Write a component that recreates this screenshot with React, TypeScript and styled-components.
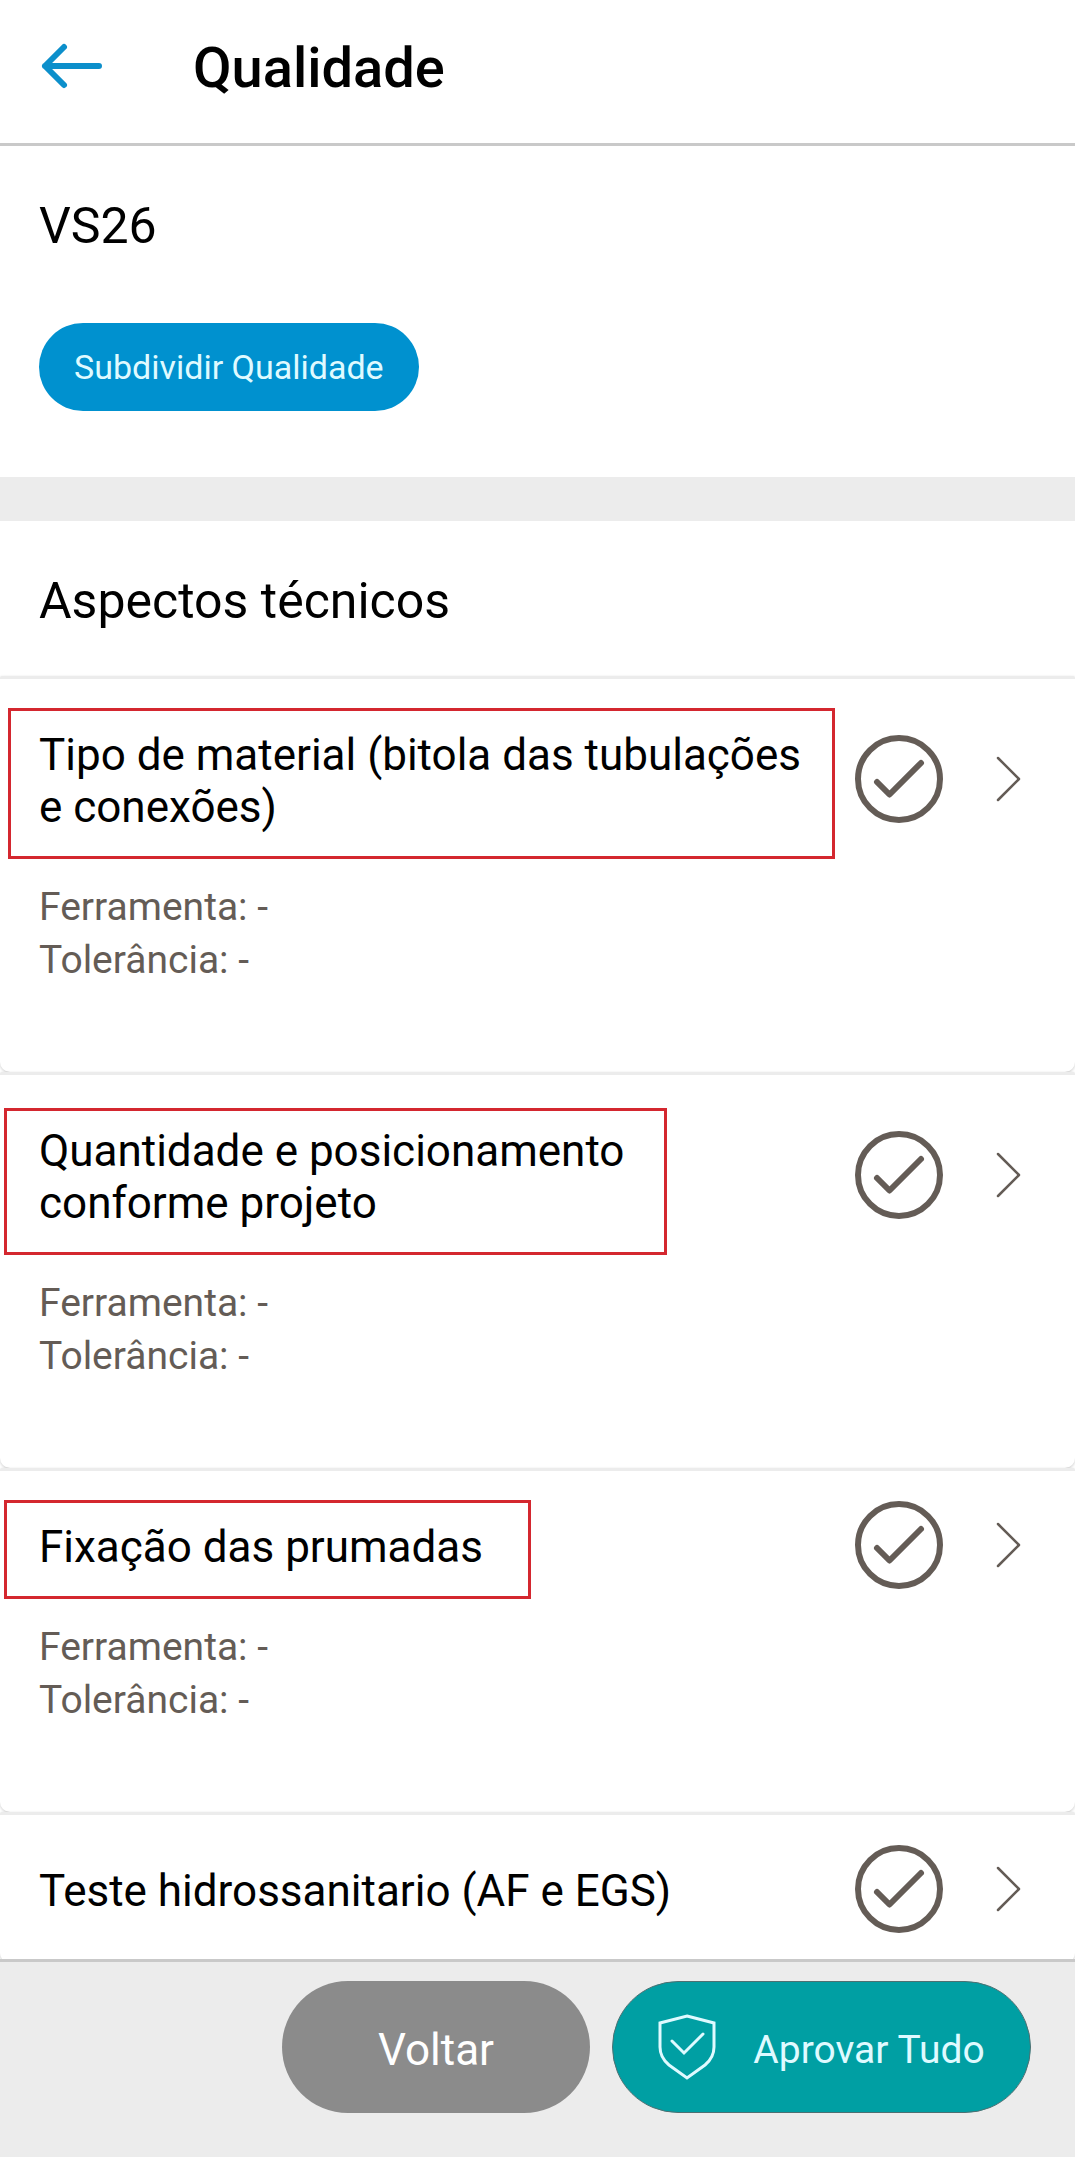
import React from "react";
import styled, { createGlobalStyle } from "styled-components";

const GlobalStyle = createGlobalStyle`
  * { box-sizing: border-box; }
  body {
    margin: 0;
    background: #ffffff;
    color: #000000;
    font-family: Roboto, "Liberation Sans", sans-serif;
  }
  h1, h2, h3, p, ul { margin: 0; padding: 0; font-weight: 400; }
  button { font: inherit; padding: 0; border: 0; background: none; cursor: pointer; }
  svg { display: block; }
`;

const Page = styled.div`
  height: 100vh;
  display: flex;
  flex-direction: column;
`;

const Header = styled.header`
  flex: none;
  display: flex;
  align-items: center;
  gap: 89px;
  padding: 36px 40px 43px;
  border-bottom: 3px solid #c9c9c9;
`;

const BackButton = styled.button`
  display: flex;
  padding-bottom: 4px;
  color: #0c8fcb;
`;

const PageTitle = styled.h1`
  font-size: 56px;
  line-height: 64px;
  font-weight: 500;
`;

const Content = styled.main`
  flex: 1;
  min-height: 0;
  overflow-y: auto;
  scrollbar-width: none;
`;

const Summary = styled.section`
  display: flex;
  flex-direction: column;
  align-items: flex-start;
  gap: 67px;
  padding: 50px 39px 66px;
`;

const SectionTitle = styled.h2`
  font-size: 50px;
  line-height: 60px;
`;

const SplitButton = styled.button`
  height: 88px;
  padding: 0 35px;
  border-radius: 44px;
  background: #0091cf;
  color: #dffaff;
  font-size: 34px;
`;

const Band = styled.div`
  height: 44px;
  background: #ececec;
`;

const AspectsHeader = styled.div`
  padding: 50px 39px 45px;
`;

const CardList = styled.ul`
  list-style: none;
`;

const Card = styled.li`
  border-top: 3px solid #ececec;
  border-radius: 2px 2px 10px 10px;
  background: #ffffff;
  box-shadow: 0 1px 3px rgba(0, 0, 0, 0.2);
`;

const CardHead = styled.div`
  position: relative;
  display: flex;
  align-items: center;
  padding-right: 54px;
`;

const CardTitle = styled.h3`
  flex: 1;
  padding: 50px 20px 46px 39px;
  font-size: 44px;
  line-height: 52px;
`;

const IconButton = styled.button`
  display: flex;
  margin-left: 12px;
  color: #645c56;

  & + & {
    margin-left: 53px;
  }
`;

const Highlight = styled.span<{ $top: number; $left: number; $width: number; $bottom: number }>`
  position: absolute;
  top: ${(p) => p.$top}px;
  left: ${(p) => p.$left}px;
  width: ${(p) => p.$width}px;
  bottom: ${(p) => p.$bottom}px;
  border: 3px solid #d4272f;
  pointer-events: none;
`;

const Details = styled.div`
  padding: 2px 39px 85px;
  color: #645c56;
  font-size: 39px;
  line-height: 53px;
`;

const Footer = styled.footer`
  flex: none;
  position: relative;
  display: flex;
  justify-content: flex-end;
  gap: 22px;
  padding: 19px 44px 44px;
  border-top: 3px solid #c9c9c9;
  background: #ececec;
`;

const FooterButton = styled.button`
  display: flex;
  align-items: center;
  justify-content: center;
  height: 132px;
  border-radius: 66px;
`;

const FooterLabel = styled.span`
  padding-top: 5px;
`;

const GoBack = styled(FooterButton)`
  width: 308px;
  background: #8b8b8b;
  color: #ffffff;
  font-size: 44px;
`;

const ApproveAll = styled(FooterButton)`
  width: 419px;
  gap: 37px;
  border: 1px solid #4d7072;
  background: #009fa3;
  color: #dffaff;
  font-size: 39px;
`;

const BackArrow = () => (
  <svg width="64" height="48" viewBox="0 0 64 48" fill="none" stroke="currentColor" strokeWidth="6" strokeLinecap="round" strokeLinejoin="round">
    <path d="M59 24H5M24 5L5 24L24 43" />
  </svg>
);

const CheckCircle = () => (
  <svg width="88" height="88" viewBox="0 0 88 88" fill="none" stroke="currentColor" strokeWidth="6" strokeLinecap="round" strokeLinejoin="round">
    <circle cx="44" cy="44" r="41" />
    <path d="M22 47L34.500 59.500L66 28" />
  </svg>
);

const Chevron = () => (
  <svg width="25" height="46" viewBox="0 0 25 46" fill="none" stroke="currentColor" strokeWidth="2.500" strokeLinecap="round" strokeLinejoin="round">
    <path d="M2 2L23 23L2 44" />
  </svg>
);

const Shield = () => (
  <svg width="58" height="66" viewBox="0 0 58 66" fill="none" stroke="currentColor" strokeWidth="3">
    <path d="M29 2L56 9V33C56 40 53 46 47 51L29 64L11 51C5 46 2 40 2 33V9Z" />
    <path d="M14 27L26 39L45 20" strokeLinecap="round" />
  </svg>
);

type Mark = { top: number; left: number; width: number; bottom: number };
type Aspect = { title: string; mark?: Mark };

const aspects: Aspect[] = [
  { title: "Tipo de material (bitola das tubulações e conexões)", mark: { top: 29, left: 8, width: 827, bottom: 20 } },
  { title: "Quantidade e posicionamento conforme projeto", mark: { top: 33, left: 4, width: 663, bottom: 20 } },
  { title: "Fixação das prumadas", mark: { top: 29, left: 4, width: 527, bottom: 20 } },
];

const AspectHead = ({ title, mark }: Aspect) => (
  <CardHead>
    <CardTitle>{title}</CardTitle>
    <IconButton aria-label="Aprovar"><CheckCircle /></IconButton>
    <IconButton aria-label="Abrir"><Chevron /></IconButton>
    {mark && <Highlight $top={mark.top} $left={mark.left} $width={mark.width} $bottom={mark.bottom} />}
  </CardHead>
);

export default function App() {
  return (
    <Page>
      <GlobalStyle />
      <Header>
        <BackButton aria-label="Voltar"><BackArrow /></BackButton>
        <PageTitle>Qualidade</PageTitle>
      </Header>
      <Content>
        <Summary>
          <SectionTitle>VS26</SectionTitle>
          <SplitButton>Subdividir Qualidade</SplitButton>
        </Summary>
        <Band />
        <AspectsHeader>
          <SectionTitle>Aspectos técnicos</SectionTitle>
        </AspectsHeader>
        <CardList>
          {aspects.map((a) => (
            <Card key={a.title}>
              <AspectHead {...a} />
              <Details>
                <p>Ferramenta: -</p>
                <p>Tolerância: -</p>
              </Details>
            </Card>
          ))}
          <Card>
            <AspectHead title="Teste hidrossanitario (AF e EGS)" />
          </Card>
        </CardList>
      </Content>
      <Footer>
        <GoBack><FooterLabel>Voltar</FooterLabel></GoBack>
        <ApproveAll><Shield /><FooterLabel>Aprovar Tudo</FooterLabel></ApproveAll>
      </Footer>
    </Page>
  );
}
